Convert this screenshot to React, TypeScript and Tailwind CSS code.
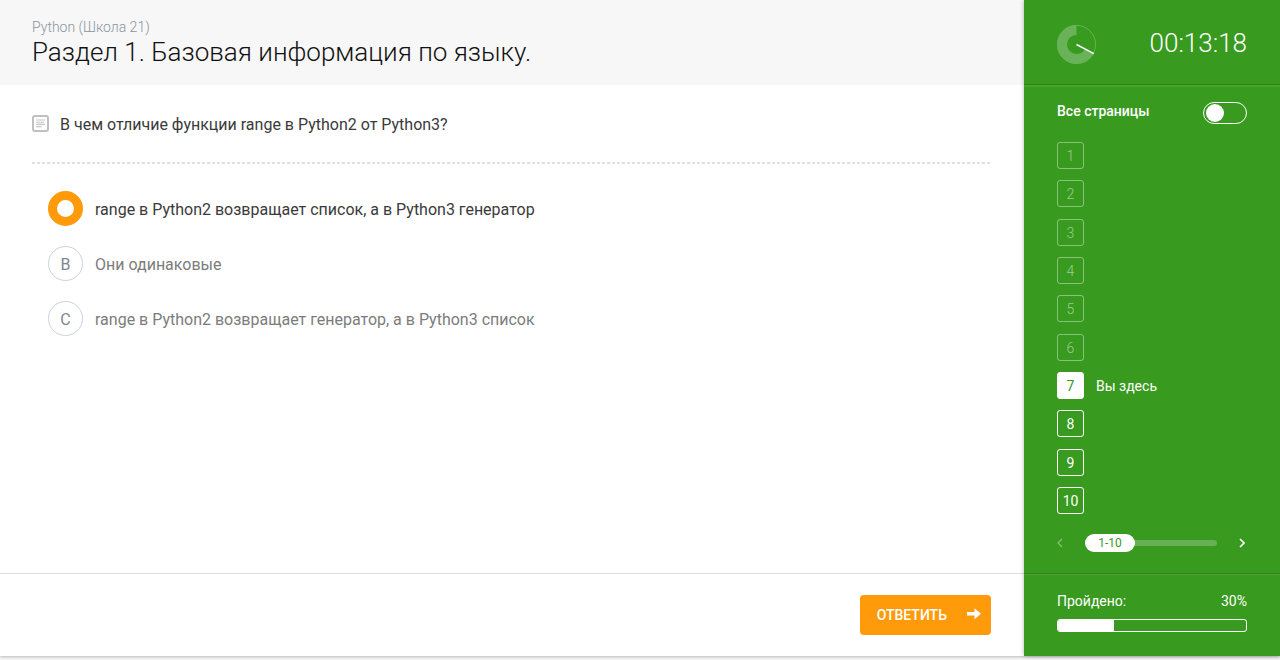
import { useState } from "react";

const options = [
  { letter: "A", text: "range в Python2 возвращает список, а в Python3 генератор" },
  { letter: "B", text: "Они одинаковые" },
  { letter: "C", text: "range в Python2 возвращает генератор, а в Python3 список" },
];

const pages = [1, 2, 3, 4, 5, 6, 7, 8, 9, 10];
const currentPage = 7;

function NoteIcon() {
  return (
    <svg width="17" height="17" viewBox="0 0 17 17" fill="none" aria-hidden="true" className="shrink-0">
      <rect x="1" y="1" width="15" height="15" rx="2" stroke="#c0c0c0" strokeWidth="2" />
      <path d="M4 5H13M4 7.2H12M4 9.4H13M4 11.6H9.5" stroke="#c4c4c4" strokeWidth="1.1" />
    </svg>
  );
}

function ClockIcon() {
  return (
    <svg width="40" height="40" viewBox="0 0 40 40" fill="none" aria-hidden="true">
      <circle cx="19.5" cy="19.5" r="19.1" stroke="#6bb35a" strokeWidth="0.9" />
      <path
        d="M19.5 0A19.5 19.5 0 1 0 36.8 28.5L28 23.9A9.5 9.5 0 1 1 19.5 10Z"
        fill="#69b258"
      />
      <path d="M19.5 19.5L36.8 28.6" stroke="#fff" strokeWidth="1.5" />
    </svg>
  );
}

function ArrowIcon() {
  return (
    <svg width="14" height="14" viewBox="0 0 14 14" fill="#fff" aria-hidden="true">
      <path d="M0 3.9H7.5V0.2L14 5.7L7.5 11.2V7.5H0Z" />
    </svg>
  );
}

function Chevron({ left }: { left?: boolean }) {
  return (
    <svg width="6" height="10" viewBox="0 0 6 10" fill="none" stroke="#fff" aria-hidden="true">
      <path d={left ? "M5 1L1 5L5 9" : "M1 1L5 5L1 9"} strokeWidth={left ? 1.2 : 1.6} />
    </svg>
  );
}

function pageClass(page: number) {
  const base = "flex size-[27px] items-center justify-center rounded-[3px] border pt-px text-[14px] leading-5";
  if (page === currentPage) return base + " border-white bg-white font-normal text-[#389a1f]";
  if (page < currentPage) return base + " border-white/40 font-light text-white/50";
  return base + " border-white font-normal text-white";
}

export default function App() {
  const [answer, setAnswer] = useState("A");
  const [all, setAll] = useState(false);
  const [range, setRange] = useState(0);

  return (
    <div className="flex min-h-screen flex-col bg-[#f7f7f8] pb-1 font-['Roboto',sans-serif] font-light">
      <div className="flex grow bg-white shadow-[0_1px_3px_rgba(0,0,0,0.25)]">
        <main className="flex min-w-0 grow flex-col">
          <header className="bg-[#f7f7f7] px-8 pt-[17px] pb-[18px]">
            <p className="text-[14px] leading-5 text-[#8a949f]">Python (Школа 21)</p>
            <h1 className="text-[26px] leading-[30px] text-[#111]">Раздел 1. Базовая информация по языку.</h1>
          </header>

          <form id="quiz" className="grow px-8" onSubmit={(e) => e.preventDefault()}>
            <fieldset>
              <legend className="flex w-full items-center gap-[11px] py-[25px] text-[16px] leading-[25px] font-normal text-[#3a3a3a]">
                <NoteIcon />
                <span className="pt-[2px]">В чем отличие функции range в Python2 от Python3?</span>
              </legend>
              <div
                aria-hidden="true"
                className="mr-px h-[2px] bg-[repeating-linear-gradient(90deg,#e0e0e0_0_3px,transparent_3px_5px)]"
              />
              <div className="flex flex-col gap-5 pt-[27px] pl-4">
                {options.map((o) => (
                  <label key={o.letter} className="flex cursor-pointer items-center gap-3 text-[16px] leading-6 font-normal text-[#7c7c7c] has-checked:text-[#3a3a3a]">
                    <span className="relative flex size-[35px] shrink-0 items-center justify-center">
                      <input
                        type="radio"
                        name="answer"
                        value={o.letter}
                        checked={answer === o.letter}
                        onChange={() => setAnswer(o.letter)}
                        className="peer size-full appearance-none rounded-full border border-[#ccd3d9] checked:border-[9px] checked:border-[#ff9a0a]"
                      />
                      <span className="pointer-events-none absolute pt-[2px] text-[#7c8690] peer-checked:hidden">{o.letter}</span>
                    </span>
                    <span className="pt-[2px]">{o.text}</span>
                  </label>
                ))}
              </div>
            </fieldset>
          </form>

          <footer className="flex justify-end border-t border-[#dedede] py-[21px] pr-[33px]">
            <button type="submit" form="quiz" className="flex h-10 items-center gap-5 rounded-[4px] bg-[#ff9a0a] pr-[10px] pl-[17px] text-[14px] font-medium text-white">
              ОТВЕТИТЬ
              <ArrowIcon />
            </button>
          </footer>
        </main>

        <aside className="flex w-64 shrink-0 flex-col bg-[#389a1f] text-white shadow-[0_0_4px_rgba(0,0,0,0.3)]">
          <div className="flex items-center justify-between border-b border-[#2f8419] px-[33px] pt-[25px] pb-[19px]">
            <ClockIcon />
            <time className="pb-1 text-[26px] leading-8">00:13:18</time>
          </div>

          <div className="flex grow flex-col border-t-2 border-[#48a331] px-[33px] pt-[14px]">
            <label className="flex items-center justify-between text-[14px] leading-6 font-medium">
              <span className="pb-1 leading-5">Все страницы</span>
              <input
                type="checkbox"
                role="switch"
                checked={all}
                onChange={(e) => setAll(e.target.checked)}
                className="flex h-[22px] w-11 cursor-pointer appearance-none items-center rounded-full border border-white px-[2px] before:size-[18px] before:rounded-full before:bg-white checked:justify-end"
              />
            </label>

            <nav className="flex grow flex-col justify-between pt-[17px] pb-5">
              {pages.map((p) => (
                <div key={p} className="flex items-center gap-3">
                  <button type="button" className={pageClass(p)}>{p}</button>
                  {p === currentPage && <span className="pt-px text-[14px] leading-5 font-normal">Вы здесь</span>}
                </div>
              ))}
            </nav>

            <div className="flex items-center pb-[21px]">
              <button type="button" aria-label="Назад" disabled className="pr-[22px] opacity-40">
                <Chevron left />
              </button>
              <div className="relative flex grow items-center">
                <input
                  type="range"
                  aria-label="Страницы"
                  min={0}
                  max={1}
                  value={range}
                  onChange={(e) => setRange(Number(e.target.value))}
                  className="h-[18px] w-full appearance-none bg-transparent [&::-webkit-slider-runnable-track]:h-[6px] [&::-webkit-slider-runnable-track]:rounded-full [&::-webkit-slider-runnable-track]:bg-[#67b056] [&::-webkit-slider-thumb]:-mt-[6px] [&::-webkit-slider-thumb]:h-[18px] [&::-webkit-slider-thumb]:w-[50px] [&::-webkit-slider-thumb]:appearance-none [&::-webkit-slider-thumb]:rounded-full [&::-webkit-slider-thumb]:bg-white"
                />
                <span className="pointer-events-none absolute left-0 w-[50px] text-center text-[12px] leading-[18px] font-normal text-[#389a1f]">1-10</span>
              </div>
              <button type="button" aria-label="Вперёд" className="pr-[2px] pl-[22px]">
                <Chevron />
              </button>
            </div>
          </div>

          <div className="border-t border-[#2f8419]">
            <div className="border-t border-[#48a331] px-[33px] pt-4 pb-6">
              <div className="flex justify-between text-[14px] leading-5 font-normal">
                <span>Пройдено:</span>
                <span>30%</span>
              </div>
              <div role="progressbar" aria-label="Пройдено" aria-valuenow={30} className="mt-2 h-[13px] overflow-hidden rounded-[3px] border border-white">
                <div className="h-full w-[30%] bg-white" />
              </div>
            </div>
          </div>
        </aside>
      </div>
    </div>
  );
}
